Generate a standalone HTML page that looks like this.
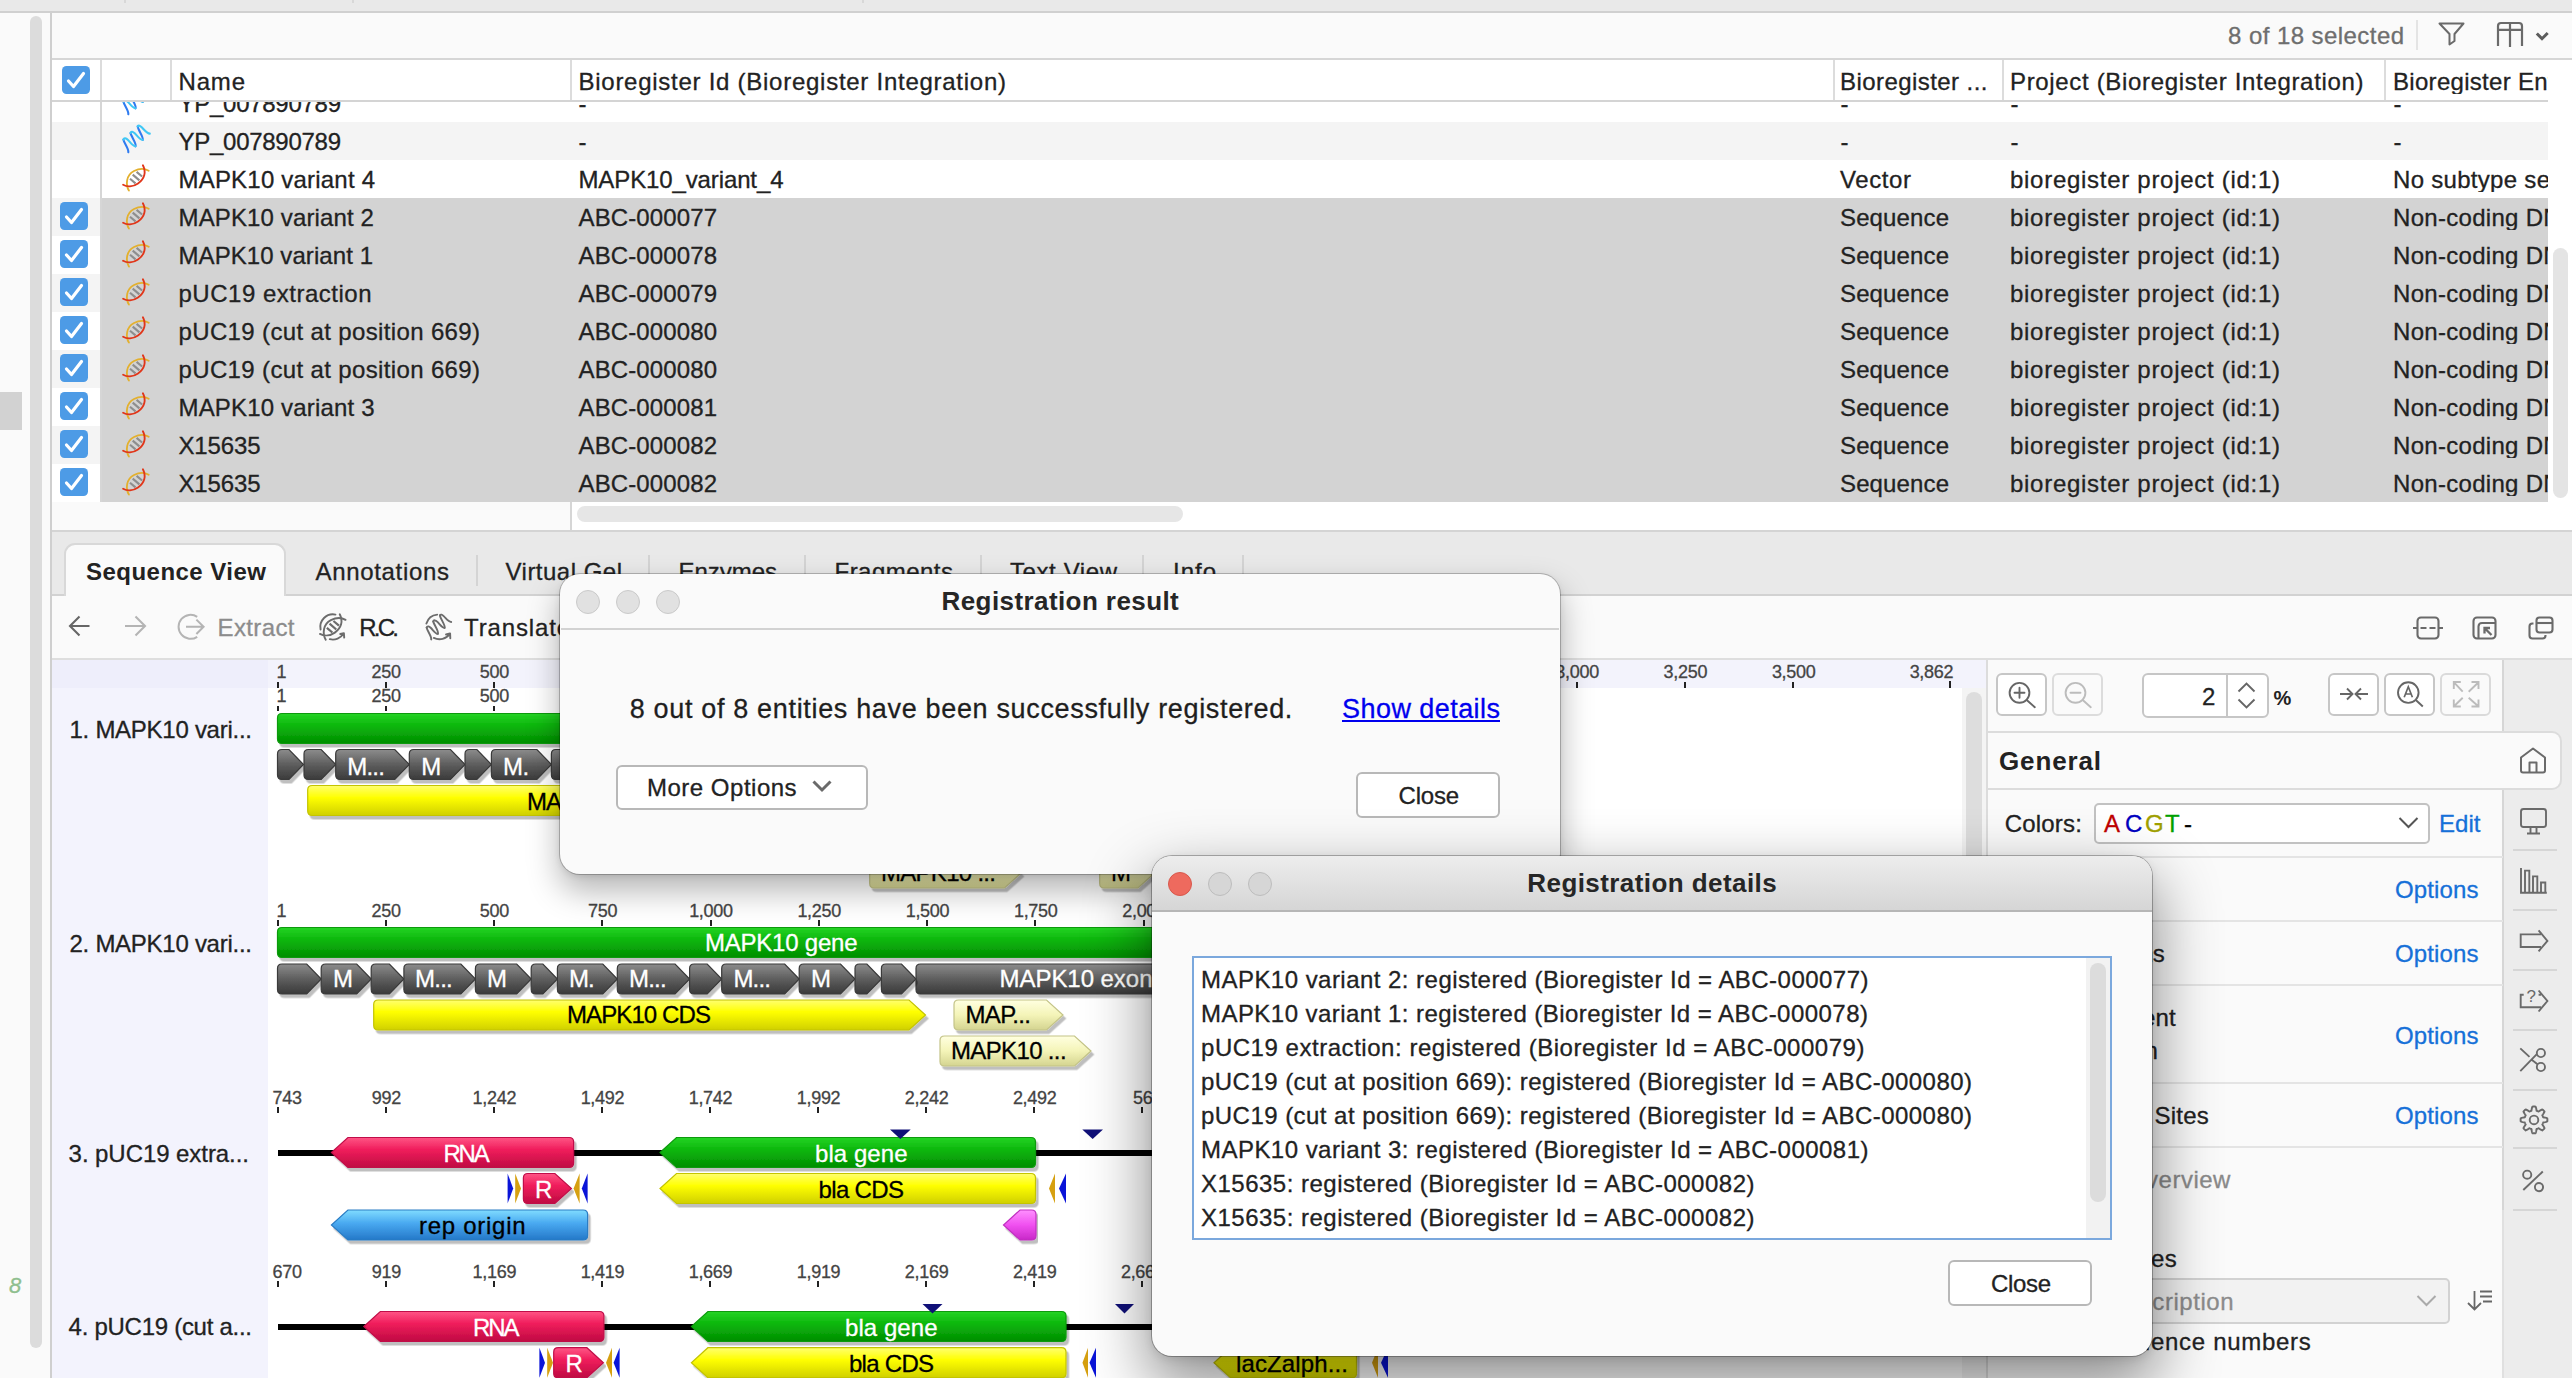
<!DOCTYPE html>
<html><head><meta charset="utf-8"><title>Registration result</title>
<style>
html,body{margin:0;padding:0;}
body{width:2572px;height:1378px;overflow:hidden;position:relative;background:#fafafa;font-family:"Liberation Sans",sans-serif;}
div{position:absolute;box-sizing:border-box;}
svg{position:absolute;overflow:visible;}
.t{white-space:nowrap;-webkit-text-stroke:0.3px;}
.b{-webkit-text-stroke:0;}
</style></head><body>
<div style="left:0px;top:0px;width:2572px;height:11px;background:#e9e9e9;"></div>
<div style="left:124px;top:0px;width:2px;height:3px;background:#d8d8d8;"></div>
<div style="left:352px;top:0px;width:2px;height:3px;background:#d8d8d8;"></div>
<div style="left:862px;top:0px;width:2px;height:3px;background:#d8d8d8;"></div>
<div style="left:0px;top:11px;width:2572px;height:2px;background:#d0d0d0;"></div>
<div style="left:0px;top:13px;width:50px;height:1365px;background:#fafafa;"></div>
<div style="left:30px;top:16px;width:12px;height:1332px;background:#dcdcdc;border-radius:6px;"></div>
<div style="left:0px;top:392px;width:22px;height:38px;background:#d2d2d2;"></div>
<div class="t" style="left:9.00px;top:1275.00px;font-size:22px;line-height:22px;color:#8fbf8f;letter-spacing:0.000px;font-style:italic;">8</div>
<div style="left:50px;top:13px;width:2px;height:1365px;background:#cfcfcf;"></div>
<div style="left:52px;top:13px;width:2520px;height:45px;background:#fafafa;"></div>
<div class="t" style="left:2228.00px;top:24.00px;font-size:24px;line-height:24px;color:#6e6e6e;letter-spacing:0.438px;">8 of 18 selected</div>
<div style="left:2416px;top:20px;width:2px;height:30px;background:#e4e4e4;"></div>
<svg style="left:2436px;top:20px" width="32" height="28" viewBox="0 0 32 28"><path d="M3.5 3.5 H27.5 L18.5 14 V21 L13.5 24.5 V14 Z" fill="none" stroke="#6a6a6a" stroke-width="2" stroke-linejoin="round"/></svg>
<svg style="left:2494px;top:20px" width="60" height="30" viewBox="0 0 60 30"><path d="M4 26 V6 Q4 3 7 3 H25 Q28 3 28 6 V26 M4 9.8 H28 M16 3 V27" fill="none" stroke="#6a6a6a" stroke-width="2.2"/><path d="M42.800 13.500 L48 18.700 L53.700 13" fill="none" stroke="#5c5c5c" stroke-width="3"/></svg>
<div style="left:52px;top:58px;width:2520px;height:2px;background:#d6d6d6;"></div>
<div style="left:52px;top:60px;width:2520px;height:470px;background:#ffffff;"></div>
<div style="left:52px;top:84px;width:48px;height:38px;background:#ffffff;"></div>
<div style="left:100px;top:84px;width:2448px;height:38px;background:#ffffff;"></div>
<svg style="left:114px;top:84px" width="44" height="38" viewBox="0 0 44 38"><g fill="none" stroke-linecap="round" stroke-width="2.1"><path d="M14.3 30.3 C15 27 10 21 9.4 17.6 M21.5 24.3 C23 22 17 14 16.5 11 M28.7 17.9 C30 15.5 24 8 23.7 4.4" stroke="#2f7bf0"/><path d="M9.4 17.6 C10 15.5 12 16 14 18 C16.5 20.5 19 24.5 21.5 24.3 M16.5 11 C17 9 19 9.5 21 11.5 C23.5 14 26 18 28.7 17.9 M23.7 4.4 C24.5 3 26 3.5 28 5.5 C30.5 8 33 11.5 35.8 11.6" stroke="#40c8f5"/></g></svg>
<div class="t" style="left:178.50px;top:92.00px;font-size:24px;line-height:24px;color:#222;letter-spacing:-0.270px;">YP_007890789</div>
<div class="t" style="left:578.50px;top:92.00px;font-size:24px;line-height:24px;color:#222;letter-spacing:0.000px;">-</div>
<div class="t" style="left:1840.50px;top:92.00px;font-size:24px;line-height:24px;color:#222;letter-spacing:0.000px;">-</div>
<div class="t" style="left:2010.50px;top:92.00px;font-size:24px;line-height:24px;color:#222;letter-spacing:0.000px;">-</div>
<div class="t" style="left:2393.50px;top:92.00px;font-size:24px;line-height:24px;color:#222;letter-spacing:0.000px;">-</div>
<div style="left:52px;top:122px;width:48px;height:38px;background:#f4f4f4;"></div>
<div style="left:100px;top:122px;width:2448px;height:38px;background:#f4f4f4;"></div>
<svg style="left:114px;top:122px" width="44" height="38" viewBox="0 0 44 38"><g fill="none" stroke-linecap="round" stroke-width="2.1"><path d="M14.3 30.3 C15 27 10 21 9.4 17.6 M21.5 24.3 C23 22 17 14 16.5 11 M28.7 17.9 C30 15.5 24 8 23.7 4.4" stroke="#2f7bf0"/><path d="M9.4 17.6 C10 15.5 12 16 14 18 C16.5 20.5 19 24.5 21.5 24.3 M16.5 11 C17 9 19 9.5 21 11.5 C23.5 14 26 18 28.7 17.9 M23.7 4.4 C24.5 3 26 3.5 28 5.5 C30.5 8 33 11.5 35.8 11.6" stroke="#40c8f5"/></g></svg>
<div class="t" style="left:178.50px;top:130.00px;font-size:24px;line-height:24px;color:#222;letter-spacing:-0.270px;">YP_007890789</div>
<div class="t" style="left:578.50px;top:130.00px;font-size:24px;line-height:24px;color:#222;letter-spacing:0.000px;">-</div>
<div class="t" style="left:1840.50px;top:130.00px;font-size:24px;line-height:24px;color:#222;letter-spacing:0.000px;">-</div>
<div class="t" style="left:2010.50px;top:130.00px;font-size:24px;line-height:24px;color:#222;letter-spacing:0.000px;">-</div>
<div class="t" style="left:2393.50px;top:130.00px;font-size:24px;line-height:24px;color:#222;letter-spacing:0.000px;">-</div>
<div style="left:52px;top:160px;width:48px;height:38px;background:#ffffff;"></div>
<div style="left:100px;top:160px;width:2448px;height:38px;background:#ffffff;"></div>
<svg style="left:114px;top:160px" width="44" height="38" viewBox="0 0 44 38"><g fill="none"><path d="M22.6 11.9 L28.1 16.5 M18.7 14.6 L25.4 20.4 M16 18.7 L21.5 23.4" stroke="#8e8e8e" stroke-width="2.1"/><path d="M14.9 30.6 C11.5 25 12 15 20 11 C25 8.5 31 8.5 34.7 10.75" stroke="#e3b02e" stroke-width="1.85" stroke-linecap="round"/><path d="M28.9 5.2 C32.5 12 30.5 19 24 23.5 C19 27 13 27 9.1 24.8" stroke="#e0361a" stroke-width="1.85" stroke-linecap="round"/></g></svg>
<div class="t" style="left:178.50px;top:168.00px;font-size:24px;line-height:24px;color:#222;letter-spacing:0.203px;">MAPK10 variant 4</div>
<div class="t" style="left:578.50px;top:168.00px;font-size:24px;line-height:24px;color:#222;letter-spacing:-0.120px;">MAPK10_variant_4</div>
<div class="t" style="left:1840.00px;top:168.00px;font-size:24px;line-height:24px;color:#222;letter-spacing:0.591px;">Vector</div>
<div class="t" style="left:2010.00px;top:168.00px;font-size:24px;line-height:24px;color:#222;letter-spacing:0.716px;">bioregister project (id:1)</div>
<div class="t" style="left:2393.00px;top:168.00px;font-size:24px;line-height:24px;color:#222;letter-spacing:0.300px;width:155px;overflow:hidden;">No subtype selected</div>
<div style="left:52px;top:198px;width:48px;height:38px;background:#f4f4f4;"></div>
<div style="left:100px;top:198px;width:2448px;height:38px;background:#d3d3d3;"></div>
<svg style="left:60px;top:202px" width="28" height="28" viewBox="0 0 28 28"><rect width="28" height="28" rx="4.5" fill="#4d9be6"/><path d="M6.5 15 L11.5 20.5 L21.5 7.5" fill="none" stroke="#fff" stroke-width="3.2" stroke-linecap="round" stroke-linejoin="round"/></svg>
<svg style="left:114px;top:198px" width="44" height="38" viewBox="0 0 44 38"><g fill="none"><path d="M22.6 11.9 L28.1 16.5 M18.7 14.6 L25.4 20.4 M16 18.7 L21.5 23.4" stroke="#8e8e8e" stroke-width="2.1"/><path d="M14.9 30.6 C11.5 25 12 15 20 11 C25 8.5 31 8.5 34.7 10.75" stroke="#e3b02e" stroke-width="1.85" stroke-linecap="round"/><path d="M28.9 5.2 C32.5 12 30.5 19 24 23.5 C19 27 13 27 9.1 24.8" stroke="#e0361a" stroke-width="1.85" stroke-linecap="round"/></g></svg>
<div class="t" style="left:178.50px;top:206.00px;font-size:24px;line-height:24px;color:#222;letter-spacing:0.136px;">MAPK10 variant 2</div>
<div class="t" style="left:578.50px;top:206.00px;font-size:24px;line-height:24px;color:#222;letter-spacing:0.120px;">ABC-000077</div>
<div class="t" style="left:1840.00px;top:206.00px;font-size:24px;line-height:24px;color:#222;letter-spacing:0.132px;">Sequence</div>
<div class="t" style="left:2010.00px;top:206.00px;font-size:24px;line-height:24px;color:#222;letter-spacing:0.716px;">bioregister project (id:1)</div>
<div class="t" style="left:2393.00px;top:206.00px;font-size:24px;line-height:24px;color:#222;letter-spacing:0.300px;width:155px;overflow:hidden;">Non-coding DNA</div>
<div style="left:52px;top:236px;width:48px;height:38px;background:#ffffff;"></div>
<div style="left:100px;top:236px;width:2448px;height:38px;background:#d3d3d3;"></div>
<svg style="left:60px;top:240px" width="28" height="28" viewBox="0 0 28 28"><rect width="28" height="28" rx="4.5" fill="#4d9be6"/><path d="M6.5 15 L11.5 20.5 L21.5 7.5" fill="none" stroke="#fff" stroke-width="3.2" stroke-linecap="round" stroke-linejoin="round"/></svg>
<svg style="left:114px;top:236px" width="44" height="38" viewBox="0 0 44 38"><g fill="none"><path d="M22.6 11.9 L28.1 16.5 M18.7 14.6 L25.4 20.4 M16 18.7 L21.5 23.4" stroke="#8e8e8e" stroke-width="2.1"/><path d="M14.9 30.6 C11.5 25 12 15 20 11 C25 8.5 31 8.5 34.7 10.75" stroke="#e3b02e" stroke-width="1.85" stroke-linecap="round"/><path d="M28.9 5.2 C32.5 12 30.5 19 24 23.5 C19 27 13 27 9.1 24.8" stroke="#e0361a" stroke-width="1.85" stroke-linecap="round"/></g></svg>
<div class="t" style="left:178.50px;top:244.00px;font-size:24px;line-height:24px;color:#222;letter-spacing:0.070px;">MAPK10 variant 1</div>
<div class="t" style="left:578.50px;top:244.00px;font-size:24px;line-height:24px;color:#222;letter-spacing:0.120px;">ABC-000078</div>
<div class="t" style="left:1840.00px;top:244.00px;font-size:24px;line-height:24px;color:#222;letter-spacing:0.132px;">Sequence</div>
<div class="t" style="left:2010.00px;top:244.00px;font-size:24px;line-height:24px;color:#222;letter-spacing:0.716px;">bioregister project (id:1)</div>
<div class="t" style="left:2393.00px;top:244.00px;font-size:24px;line-height:24px;color:#222;letter-spacing:0.300px;width:155px;overflow:hidden;">Non-coding DNA</div>
<div style="left:52px;top:274px;width:48px;height:38px;background:#f4f4f4;"></div>
<div style="left:100px;top:274px;width:2448px;height:38px;background:#d3d3d3;"></div>
<svg style="left:60px;top:278px" width="28" height="28" viewBox="0 0 28 28"><rect width="28" height="28" rx="4.5" fill="#4d9be6"/><path d="M6.5 15 L11.5 20.5 L21.5 7.5" fill="none" stroke="#fff" stroke-width="3.2" stroke-linecap="round" stroke-linejoin="round"/></svg>
<svg style="left:114px;top:274px" width="44" height="38" viewBox="0 0 44 38"><g fill="none"><path d="M22.6 11.9 L28.1 16.5 M18.7 14.6 L25.4 20.4 M16 18.7 L21.5 23.4" stroke="#8e8e8e" stroke-width="2.1"/><path d="M14.9 30.6 C11.5 25 12 15 20 11 C25 8.5 31 8.5 34.7 10.75" stroke="#e3b02e" stroke-width="1.85" stroke-linecap="round"/><path d="M28.9 5.2 C32.5 12 30.5 19 24 23.5 C19 27 13 27 9.1 24.8" stroke="#e0361a" stroke-width="1.85" stroke-linecap="round"/></g></svg>
<div class="t" style="left:178.50px;top:282.00px;font-size:24px;line-height:24px;color:#222;letter-spacing:0.506px;">pUC19 extraction</div>
<div class="t" style="left:578.50px;top:282.00px;font-size:24px;line-height:24px;color:#222;letter-spacing:0.120px;">ABC-000079</div>
<div class="t" style="left:1840.00px;top:282.00px;font-size:24px;line-height:24px;color:#222;letter-spacing:0.132px;">Sequence</div>
<div class="t" style="left:2010.00px;top:282.00px;font-size:24px;line-height:24px;color:#222;letter-spacing:0.716px;">bioregister project (id:1)</div>
<div class="t" style="left:2393.00px;top:282.00px;font-size:24px;line-height:24px;color:#222;letter-spacing:0.300px;width:155px;overflow:hidden;">Non-coding DNA</div>
<div style="left:52px;top:312px;width:48px;height:38px;background:#ffffff;"></div>
<div style="left:100px;top:312px;width:2448px;height:38px;background:#d3d3d3;"></div>
<svg style="left:60px;top:316px" width="28" height="28" viewBox="0 0 28 28"><rect width="28" height="28" rx="4.5" fill="#4d9be6"/><path d="M6.5 15 L11.5 20.5 L21.5 7.5" fill="none" stroke="#fff" stroke-width="3.2" stroke-linecap="round" stroke-linejoin="round"/></svg>
<svg style="left:114px;top:312px" width="44" height="38" viewBox="0 0 44 38"><g fill="none"><path d="M22.6 11.9 L28.1 16.5 M18.7 14.6 L25.4 20.4 M16 18.7 L21.5 23.4" stroke="#8e8e8e" stroke-width="2.1"/><path d="M14.9 30.6 C11.5 25 12 15 20 11 C25 8.5 31 8.5 34.7 10.75" stroke="#e3b02e" stroke-width="1.85" stroke-linecap="round"/><path d="M28.9 5.2 C32.5 12 30.5 19 24 23.5 C19 27 13 27 9.1 24.8" stroke="#e0361a" stroke-width="1.85" stroke-linecap="round"/></g></svg>
<div class="t" style="left:178.50px;top:320.00px;font-size:24px;line-height:24px;color:#222;letter-spacing:0.360px;">pUC19 (cut at position 669)</div>
<div class="t" style="left:578.50px;top:320.00px;font-size:24px;line-height:24px;color:#222;letter-spacing:0.120px;">ABC-000080</div>
<div class="t" style="left:1840.00px;top:320.00px;font-size:24px;line-height:24px;color:#222;letter-spacing:0.132px;">Sequence</div>
<div class="t" style="left:2010.00px;top:320.00px;font-size:24px;line-height:24px;color:#222;letter-spacing:0.716px;">bioregister project (id:1)</div>
<div class="t" style="left:2393.00px;top:320.00px;font-size:24px;line-height:24px;color:#222;letter-spacing:0.300px;width:155px;overflow:hidden;">Non-coding DNA</div>
<div style="left:52px;top:350px;width:48px;height:38px;background:#f4f4f4;"></div>
<div style="left:100px;top:350px;width:2448px;height:38px;background:#d3d3d3;"></div>
<svg style="left:60px;top:354px" width="28" height="28" viewBox="0 0 28 28"><rect width="28" height="28" rx="4.5" fill="#4d9be6"/><path d="M6.5 15 L11.5 20.5 L21.5 7.5" fill="none" stroke="#fff" stroke-width="3.2" stroke-linecap="round" stroke-linejoin="round"/></svg>
<svg style="left:114px;top:350px" width="44" height="38" viewBox="0 0 44 38"><g fill="none"><path d="M22.6 11.9 L28.1 16.5 M18.7 14.6 L25.4 20.4 M16 18.7 L21.5 23.4" stroke="#8e8e8e" stroke-width="2.1"/><path d="M14.9 30.6 C11.5 25 12 15 20 11 C25 8.5 31 8.5 34.7 10.75" stroke="#e3b02e" stroke-width="1.85" stroke-linecap="round"/><path d="M28.9 5.2 C32.5 12 30.5 19 24 23.5 C19 27 13 27 9.1 24.8" stroke="#e0361a" stroke-width="1.85" stroke-linecap="round"/></g></svg>
<div class="t" style="left:178.50px;top:358.00px;font-size:24px;line-height:24px;color:#222;letter-spacing:0.360px;">pUC19 (cut at position 669)</div>
<div class="t" style="left:578.50px;top:358.00px;font-size:24px;line-height:24px;color:#222;letter-spacing:0.120px;">ABC-000080</div>
<div class="t" style="left:1840.00px;top:358.00px;font-size:24px;line-height:24px;color:#222;letter-spacing:0.132px;">Sequence</div>
<div class="t" style="left:2010.00px;top:358.00px;font-size:24px;line-height:24px;color:#222;letter-spacing:0.716px;">bioregister project (id:1)</div>
<div class="t" style="left:2393.00px;top:358.00px;font-size:24px;line-height:24px;color:#222;letter-spacing:0.300px;width:155px;overflow:hidden;">Non-coding DNA</div>
<div style="left:52px;top:388px;width:48px;height:38px;background:#ffffff;"></div>
<div style="left:100px;top:388px;width:2448px;height:38px;background:#d3d3d3;"></div>
<svg style="left:60px;top:392px" width="28" height="28" viewBox="0 0 28 28"><rect width="28" height="28" rx="4.5" fill="#4d9be6"/><path d="M6.5 15 L11.5 20.5 L21.5 7.5" fill="none" stroke="#fff" stroke-width="3.2" stroke-linecap="round" stroke-linejoin="round"/></svg>
<svg style="left:114px;top:388px" width="44" height="38" viewBox="0 0 44 38"><g fill="none"><path d="M22.6 11.9 L28.1 16.5 M18.7 14.6 L25.4 20.4 M16 18.7 L21.5 23.4" stroke="#8e8e8e" stroke-width="2.1"/><path d="M14.9 30.6 C11.5 25 12 15 20 11 C25 8.5 31 8.5 34.7 10.75" stroke="#e3b02e" stroke-width="1.85" stroke-linecap="round"/><path d="M28.9 5.2 C32.5 12 30.5 19 24 23.5 C19 27 13 27 9.1 24.8" stroke="#e0361a" stroke-width="1.85" stroke-linecap="round"/></g></svg>
<div class="t" style="left:178.50px;top:396.00px;font-size:24px;line-height:24px;color:#222;letter-spacing:0.170px;">MAPK10 variant 3</div>
<div class="t" style="left:578.50px;top:396.00px;font-size:24px;line-height:24px;color:#222;letter-spacing:0.120px;">ABC-000081</div>
<div class="t" style="left:1840.00px;top:396.00px;font-size:24px;line-height:24px;color:#222;letter-spacing:0.132px;">Sequence</div>
<div class="t" style="left:2010.00px;top:396.00px;font-size:24px;line-height:24px;color:#222;letter-spacing:0.716px;">bioregister project (id:1)</div>
<div class="t" style="left:2393.00px;top:396.00px;font-size:24px;line-height:24px;color:#222;letter-spacing:0.300px;width:155px;overflow:hidden;">Non-coding DNA</div>
<div style="left:52px;top:426px;width:48px;height:38px;background:#f4f4f4;"></div>
<div style="left:100px;top:426px;width:2448px;height:38px;background:#d3d3d3;"></div>
<svg style="left:60px;top:430px" width="28" height="28" viewBox="0 0 28 28"><rect width="28" height="28" rx="4.5" fill="#4d9be6"/><path d="M6.5 15 L11.5 20.5 L21.5 7.5" fill="none" stroke="#fff" stroke-width="3.2" stroke-linecap="round" stroke-linejoin="round"/></svg>
<svg style="left:114px;top:426px" width="44" height="38" viewBox="0 0 44 38"><g fill="none"><path d="M22.6 11.9 L28.1 16.5 M18.7 14.6 L25.4 20.4 M16 18.7 L21.5 23.4" stroke="#8e8e8e" stroke-width="2.1"/><path d="M14.9 30.6 C11.5 25 12 15 20 11 C25 8.5 31 8.5 34.7 10.75" stroke="#e3b02e" stroke-width="1.85" stroke-linecap="round"/><path d="M28.9 5.2 C32.5 12 30.5 19 24 23.5 C19 27 13 27 9.1 24.8" stroke="#e0361a" stroke-width="1.85" stroke-linecap="round"/></g></svg>
<div class="t" style="left:178.50px;top:434.00px;font-size:24px;line-height:24px;color:#222;letter-spacing:-0.147px;">X15635</div>
<div class="t" style="left:578.50px;top:434.00px;font-size:24px;line-height:24px;color:#222;letter-spacing:0.120px;">ABC-000082</div>
<div class="t" style="left:1840.00px;top:434.00px;font-size:24px;line-height:24px;color:#222;letter-spacing:0.132px;">Sequence</div>
<div class="t" style="left:2010.00px;top:434.00px;font-size:24px;line-height:24px;color:#222;letter-spacing:0.716px;">bioregister project (id:1)</div>
<div class="t" style="left:2393.00px;top:434.00px;font-size:24px;line-height:24px;color:#222;letter-spacing:0.300px;width:155px;overflow:hidden;">Non-coding DNA</div>
<div style="left:52px;top:464px;width:48px;height:38px;background:#ffffff;"></div>
<div style="left:100px;top:464px;width:2448px;height:38px;background:#d3d3d3;"></div>
<svg style="left:60px;top:468px" width="28" height="28" viewBox="0 0 28 28"><rect width="28" height="28" rx="4.5" fill="#4d9be6"/><path d="M6.5 15 L11.5 20.5 L21.5 7.5" fill="none" stroke="#fff" stroke-width="3.2" stroke-linecap="round" stroke-linejoin="round"/></svg>
<svg style="left:114px;top:464px" width="44" height="38" viewBox="0 0 44 38"><g fill="none"><path d="M22.6 11.9 L28.1 16.5 M18.7 14.6 L25.4 20.4 M16 18.7 L21.5 23.4" stroke="#8e8e8e" stroke-width="2.1"/><path d="M14.9 30.6 C11.5 25 12 15 20 11 C25 8.5 31 8.5 34.7 10.75" stroke="#e3b02e" stroke-width="1.85" stroke-linecap="round"/><path d="M28.9 5.2 C32.5 12 30.5 19 24 23.5 C19 27 13 27 9.1 24.8" stroke="#e0361a" stroke-width="1.85" stroke-linecap="round"/></g></svg>
<div class="t" style="left:178.50px;top:472.00px;font-size:24px;line-height:24px;color:#222;letter-spacing:-0.147px;">X15635</div>
<div class="t" style="left:578.50px;top:472.00px;font-size:24px;line-height:24px;color:#222;letter-spacing:0.120px;">ABC-000082</div>
<div class="t" style="left:1840.00px;top:472.00px;font-size:24px;line-height:24px;color:#222;letter-spacing:0.132px;">Sequence</div>
<div class="t" style="left:2010.00px;top:472.00px;font-size:24px;line-height:24px;color:#222;letter-spacing:0.716px;">bioregister project (id:1)</div>
<div class="t" style="left:2393.00px;top:472.00px;font-size:24px;line-height:24px;color:#222;letter-spacing:0.300px;width:155px;overflow:hidden;">Non-coding DNA</div>
<div style="left:100px;top:60px;width:2px;height:442px;background:#d6d6d6;"></div>
<div style="left:52px;top:60px;width:2496px;height:40px;background:#ffffff;"></div>
<div style="left:52px;top:100px;width:2496px;height:2px;background:#d4d4d4;"></div>
<div style="left:100px;top:60px;width:2px;height:40px;background:#dcdcdc;"></div>
<div style="left:170px;top:60px;width:2px;height:40px;background:#dcdcdc;"></div>
<div style="left:570px;top:60px;width:2px;height:40px;background:#dcdcdc;"></div>
<div style="left:1833px;top:60px;width:2px;height:40px;background:#dcdcdc;"></div>
<div style="left:2002px;top:60px;width:2px;height:40px;background:#dcdcdc;"></div>
<div style="left:2384px;top:60px;width:2px;height:40px;background:#dcdcdc;"></div>
<svg style="left:62px;top:66px" width="28" height="28" viewBox="0 0 28 28"><rect width="28" height="28" rx="4.5" fill="#4d9be6"/><path d="M6.5 15 L11.5 20.5 L21.5 7.5" fill="none" stroke="#fff" stroke-width="3.2" stroke-linecap="round" stroke-linejoin="round"/></svg>
<div class="t" style="left:178.50px;top:70.00px;font-size:24px;line-height:24px;color:#222;letter-spacing:0.828px;">Name</div>
<div class="t" style="left:578.50px;top:70.00px;font-size:24px;line-height:24px;color:#222;letter-spacing:0.734px;">Bioregister Id (Bioregister Integration)</div>
<div class="t" style="left:1840.00px;top:70.00px;font-size:24px;line-height:24px;color:#222;letter-spacing:0.435px;">Bioregister ...</div>
<div class="t" style="left:2010.00px;top:70.00px;font-size:24px;line-height:24px;color:#222;letter-spacing:0.667px;">Project (Bioregister Integration)</div>
<div class="t" style="left:2393.00px;top:70.00px;font-size:24px;line-height:24px;color:#222;letter-spacing:0.300px;width:155px;overflow:hidden;">Bioregister Entity</div>
<div style="left:2548px;top:60px;width:24px;height:470px;background:#ffffff;"></div>
<div style="left:2553px;top:248px;width:15px;height:250px;background:#e4e4e4;border-radius:7.5px;"></div>
<div style="left:52px;top:502px;width:518px;height:28px;background:#fafafa;"></div>
<div style="left:570px;top:502px;width:2px;height:28px;background:#d6d6d6;"></div>
<div style="left:572px;top:502px;width:2000px;height:28px;background:#ffffff;"></div>
<div style="left:577px;top:506px;width:606px;height:16px;background:#e6e6e6;border-radius:8px;"></div>
<div style="left:52px;top:530px;width:2520px;height:2px;background:#d4d4d4;"></div>
<div style="left:52px;top:532px;width:2520px;height:62px;background:#e9e9e9;"></div>
<div style="left:52px;top:594px;width:2520px;height:2px;background:#d2d2d2;"></div>
<div style="left:64px;top:543px;width:222px;height:53px;background:#fafafa;border:2px solid #d8d8d8;border-bottom:none;border-radius:11px 11px 0 0;"></div>
<div class="t b" style="left:86.00px;top:560.00px;font-size:24px;line-height:24px;color:#222;letter-spacing:0.475px;font-weight:bold;">Sequence View</div>
<div class="t" style="left:315.50px;top:560.00px;font-size:24px;line-height:24px;color:#222;letter-spacing:0.675px;">Annotations</div>
<div class="t" style="left:505.50px;top:560.00px;font-size:24px;line-height:24px;color:#222;letter-spacing:0.489px;">Virtual Gel</div>
<div class="t" style="left:678.50px;top:560.00px;font-size:24px;line-height:24px;color:#222;letter-spacing:-0.034px;">Enzymes</div>
<div class="t" style="left:834.50px;top:560.00px;font-size:24px;line-height:24px;color:#222;letter-spacing:0.475px;">Fragments</div>
<div class="t" style="left:1010.00px;top:560.00px;font-size:24px;line-height:24px;color:#222;letter-spacing:0.592px;">Text View</div>
<div class="t" style="left:1173.00px;top:560.00px;font-size:24px;line-height:24px;color:#222;letter-spacing:0.990px;">Info</div>
<div style="left:476px;top:555px;width:2px;height:31px;background:#d4d4d4;"></div>
<div style="left:648px;top:555px;width:2px;height:31px;background:#d4d4d4;"></div>
<div style="left:804px;top:555px;width:2px;height:31px;background:#d4d4d4;"></div>
<div style="left:980px;top:555px;width:2px;height:31px;background:#d4d4d4;"></div>
<div style="left:1142px;top:555px;width:2px;height:31px;background:#d4d4d4;"></div>
<div style="left:1242px;top:555px;width:2px;height:31px;background:#d4d4d4;"></div>
<div style="left:52px;top:596px;width:2520px;height:62px;background:#fafafa;"></div>
<div style="left:52px;top:658px;width:2520px;height:2px;background:#dedede;"></div>
<svg style="left:64px;top:610px" width="90" height="32" viewBox="0 0 90 32"><g fill="none" stroke-width="2.1" stroke-linecap="butt"><path d="M25.5 16 H6.5 M15.5 6.5 L6 16 L15.5 25.5" stroke="#666"/><path d="M61 16 H80.5 M71.5 6.5 L81 16 L71.5 25.5" stroke="#b4b4b4"/></g></svg>
<svg style="left:174px;top:610px" width="36" height="32" viewBox="0 0 36 32"><g fill="none" stroke="#b4b4b4" stroke-width="2"><path d="M23.200 6.800 A12 12 0 1 0 23.200 26.800"/><path d="M12 16.800 H29 M22.400 9.600 L29.600 16.800 L22.400 24"/></g></svg>
<div class="t" style="left:217.50px;top:616.00px;font-size:24px;line-height:24px;color:#8c8c8c;letter-spacing:0.383px;">Extract</div>
<svg style="left:310px;top:606px" width="150" height="40" viewBox="0 0 150 40"><g fill="none" stroke="#6c6c6c" stroke-width="1.9" stroke-linecap="round" stroke-linejoin="round"><g transform="translate(0.85,3.1)"><path d="M22.6 11.9 L28.1 16.5 M18.7 14.6 L25.4 20.4 M16 18.7 L21.5 23.4" stroke-width="2.2" stroke-linecap="butt"/><path d="M14.9 30.6 C11.5 25 12 15 20 11 C25 8.5 31 8.5 34.7 10.75"/><path d="M28.9 5.2 C32.5 12 30.5 19 24 23.5 C19 27 13 27 9.1 24.8"/></g><path d="M10.6 23.5 A12.6 12.6 0 0 1 25.5 8.6"/><path d="M19.8 33.2 A12.6 12.6 0 0 0 33.6 27.6 M30.2 28 L33.9 27.2 L34.2 31.6"/><g transform="translate(107.9,5.25) scale(0.93)" stroke-width="2.05"><path d="M14.3 30.3 C15 27 10 21 9.4 17.6 M21.5 24.3 C23 22 17 14 16.5 11 M28.7 17.9 C30 15.5 24 8 23.7 4.4"/><path d="M9.4 17.6 C10 15.5 12 16 14 18 C16.5 20.5 19 24.5 21.5 24.3 M16.5 11 C17 9 19 9.5 21 11.5 C23.5 14 26 18 28.7 17.9 M23.7 4.4 C24.5 3 26 3.5 28 5.5 C30.5 8 33 11.5 35.8 11.6"/></g><path d="M116.4 17.5 A12.6 12.6 0 0 1 127.2 8.6"/><path d="M123.8 31.9 A12.6 12.6 0 0 0 139.9 27.8 M136 28.5 L140.1 27.4 L140.3 32.2"/></g></svg>
<div class="t" style="left:359.30px;top:616.00px;font-size:24px;line-height:24px;color:#222;letter-spacing:-2.767px;">R.C.</div>
<div class="t" style="left:464.00px;top:616.00px;font-size:24px;line-height:24px;color:#222;letter-spacing:0.857px;">Translate</div>
<svg style="left:2410px;top:612px" width="150" height="32" viewBox="0 0 150 32"><g fill="none" stroke="#6a6a6a" stroke-width="2.1"><rect x="7.5" y="5.5" width="21" height="21" rx="3.5"/><path d="M3 16 H7.5 M28.5 16 H33 M10.5 16 H16.5 M19.5 16 H25.5"/><rect x="63.5" y="5.5" width="22" height="21" rx="3.5"/><path d="M68.5 26.500 V14.500 Q68.5 11 72 11 H85.5"/><path d="M74.5 16 L81.5 23 M74.5 21.500 V16 H80" stroke-width="2.3"/><rect x="126.500" y="5.500" width="16" height="15" rx="3"/><path d="M126.500 11 H142.500"/><path d="M123.500 11.500 H122.500 Q119.500 11.500 119.500 14.500 V23.500 Q119.500 26.500 122.500 26.500 H132.500 Q135.500 26.500 135.500 23.500 V23"/></g></svg>
<div style="left:52px;top:660px;width:216px;height:718px;background:#f3f3fd;"></div>
<div style="left:268px;top:660px;width:1694px;height:718px;background:#ffffff;"></div>
<div style="left:52px;top:660px;width:216px;height:28px;background:#eeeefb;"></div>
<div style="left:268px;top:660px;width:1719px;height:28px;background:#f3f3fc;"></div>
<div style="left:1962px;top:688px;width:25px;height:690px;background:#f4f4f4;"></div>
<div style="left:1966px;top:692px;width:16px;height:420px;background:#dddddd;border-radius:8px;"></div>
<div style="left:277px;top:682px;width:2px;height:6px;background:#222;"></div>
<div class="t" style="left:276.40px;top:663.20px;font-size:18px;line-height:18px;color:#444;letter-spacing:-0.200px;">1</div>
<div style="left:385px;top:682px;width:2px;height:6px;background:#222;"></div>
<div class="t" style="left:371.52px;top:663.20px;font-size:18px;line-height:18px;color:#444;letter-spacing:-0.300px;">250</div>
<div style="left:493px;top:682px;width:2px;height:6px;background:#222;"></div>
<div class="t" style="left:479.79px;top:663.20px;font-size:18px;line-height:18px;color:#444;letter-spacing:-0.300px;">500</div>
<div style="left:601px;top:682px;width:2px;height:6px;background:#222;"></div>
<div class="t" style="left:588.07px;top:663.20px;font-size:18px;line-height:18px;color:#444;letter-spacing:-0.300px;">750</div>
<div style="left:710px;top:682px;width:2px;height:6px;background:#222;"></div>
<div class="t" style="left:689.14px;top:663.20px;font-size:18px;line-height:18px;color:#444;letter-spacing:-0.300px;">1,000</div>
<div style="left:818px;top:682px;width:2px;height:6px;background:#222;"></div>
<div class="t" style="left:797.41px;top:663.20px;font-size:18px;line-height:18px;color:#444;letter-spacing:-0.300px;">1,250</div>
<div style="left:926px;top:682px;width:2px;height:6px;background:#222;"></div>
<div class="t" style="left:905.69px;top:663.20px;font-size:18px;line-height:18px;color:#444;letter-spacing:-0.300px;">1,500</div>
<div style="left:1034px;top:682px;width:2px;height:6px;background:#222;"></div>
<div class="t" style="left:1013.96px;top:663.20px;font-size:18px;line-height:18px;color:#444;letter-spacing:-0.300px;">1,750</div>
<div style="left:1143px;top:682px;width:2px;height:6px;background:#222;"></div>
<div class="t" style="left:1122.24px;top:663.20px;font-size:18px;line-height:18px;color:#444;letter-spacing:-0.300px;">2,000</div>
<div style="left:1251px;top:682px;width:2px;height:6px;background:#222;"></div>
<div class="t" style="left:1230.51px;top:663.20px;font-size:18px;line-height:18px;color:#444;letter-spacing:-0.300px;">2,250</div>
<div style="left:1359px;top:682px;width:2px;height:6px;background:#222;"></div>
<div class="t" style="left:1338.79px;top:663.20px;font-size:18px;line-height:18px;color:#444;letter-spacing:-0.300px;">2,500</div>
<div style="left:1467px;top:682px;width:2px;height:6px;background:#222;"></div>
<div class="t" style="left:1447.06px;top:663.20px;font-size:18px;line-height:18px;color:#444;letter-spacing:-0.300px;">2,750</div>
<div style="left:1576px;top:682px;width:2px;height:6px;background:#222;"></div>
<div class="t" style="left:1555.34px;top:663.20px;font-size:18px;line-height:18px;color:#444;letter-spacing:-0.300px;">3,000</div>
<div style="left:1684px;top:682px;width:2px;height:6px;background:#222;"></div>
<div class="t" style="left:1663.61px;top:663.20px;font-size:18px;line-height:18px;color:#444;letter-spacing:-0.300px;">3,250</div>
<div style="left:1792px;top:682px;width:2px;height:6px;background:#222;"></div>
<div class="t" style="left:1771.89px;top:663.20px;font-size:18px;line-height:18px;color:#444;letter-spacing:-0.300px;">3,500</div>
<div style="left:1949px;top:681px;width:2px;height:7px;background:#222;"></div>
<div class="t" style="left:1909.64px;top:663.20px;font-size:18px;line-height:18px;color:#444;letter-spacing:-0.300px;">3,862</div>
<div style="left:277px;top:706px;width:2px;height:5px;background:#222;"></div>
<div class="t" style="left:276.40px;top:687.40px;font-size:18px;line-height:18px;color:#444;letter-spacing:-0.200px;">1</div>
<div style="left:385px;top:706px;width:2px;height:5px;background:#222;"></div>
<div class="t" style="left:371.52px;top:687.40px;font-size:18px;line-height:18px;color:#444;letter-spacing:-0.300px;">250</div>
<div style="left:493px;top:706px;width:2px;height:5px;background:#222;"></div>
<div class="t" style="left:479.79px;top:687.40px;font-size:18px;line-height:18px;color:#444;letter-spacing:-0.300px;">500</div>
<div style="left:601px;top:706px;width:2px;height:5px;background:#222;"></div>
<div class="t" style="left:588.07px;top:687.40px;font-size:18px;line-height:18px;color:#444;letter-spacing:-0.300px;">750</div>
<div style="left:710px;top:706px;width:2px;height:5px;background:#222;"></div>
<div class="t" style="left:689.14px;top:687.40px;font-size:18px;line-height:18px;color:#444;letter-spacing:-0.300px;">1,000</div>
<div style="left:818px;top:706px;width:2px;height:5px;background:#222;"></div>
<div class="t" style="left:797.41px;top:687.40px;font-size:18px;line-height:18px;color:#444;letter-spacing:-0.300px;">1,250</div>
<div style="left:926px;top:706px;width:2px;height:5px;background:#222;"></div>
<div class="t" style="left:905.69px;top:687.40px;font-size:18px;line-height:18px;color:#444;letter-spacing:-0.300px;">1,500</div>
<div style="left:1034px;top:706px;width:2px;height:5px;background:#222;"></div>
<div class="t" style="left:1013.96px;top:687.40px;font-size:18px;line-height:18px;color:#444;letter-spacing:-0.300px;">1,750</div>
<div style="left:1143px;top:706px;width:2px;height:5px;background:#222;"></div>
<div class="t" style="left:1122.24px;top:687.40px;font-size:18px;line-height:18px;color:#444;letter-spacing:-0.300px;">2,000</div>
<div style="left:1251px;top:706px;width:2px;height:5px;background:#222;"></div>
<div class="t" style="left:1230.51px;top:687.40px;font-size:18px;line-height:18px;color:#444;letter-spacing:-0.300px;">2,250</div>
<div style="left:1359px;top:706px;width:2px;height:5px;background:#222;"></div>
<div class="t" style="left:1338.79px;top:687.40px;font-size:18px;line-height:18px;color:#444;letter-spacing:-0.300px;">2,500</div>
<div style="left:1467px;top:706px;width:2px;height:5px;background:#222;"></div>
<div class="t" style="left:1447.06px;top:687.40px;font-size:18px;line-height:18px;color:#444;letter-spacing:-0.300px;">2,750</div>
<div style="left:277px;top:920px;width:2px;height:6px;background:#222;"></div>
<div class="t" style="left:276.40px;top:901.80px;font-size:18px;line-height:18px;color:#444;letter-spacing:-0.200px;">1</div>
<div style="left:385px;top:920px;width:2px;height:6px;background:#222;"></div>
<div class="t" style="left:371.52px;top:901.80px;font-size:18px;line-height:18px;color:#444;letter-spacing:-0.300px;">250</div>
<div style="left:493px;top:920px;width:2px;height:6px;background:#222;"></div>
<div class="t" style="left:479.79px;top:901.80px;font-size:18px;line-height:18px;color:#444;letter-spacing:-0.300px;">500</div>
<div style="left:601px;top:920px;width:2px;height:6px;background:#222;"></div>
<div class="t" style="left:588.07px;top:901.80px;font-size:18px;line-height:18px;color:#444;letter-spacing:-0.300px;">750</div>
<div style="left:710px;top:920px;width:2px;height:6px;background:#222;"></div>
<div class="t" style="left:689.14px;top:901.80px;font-size:18px;line-height:18px;color:#444;letter-spacing:-0.300px;">1,000</div>
<div style="left:818px;top:920px;width:2px;height:6px;background:#222;"></div>
<div class="t" style="left:797.41px;top:901.80px;font-size:18px;line-height:18px;color:#444;letter-spacing:-0.300px;">1,250</div>
<div style="left:926px;top:920px;width:2px;height:6px;background:#222;"></div>
<div class="t" style="left:905.69px;top:901.80px;font-size:18px;line-height:18px;color:#444;letter-spacing:-0.300px;">1,500</div>
<div style="left:1034px;top:920px;width:2px;height:6px;background:#222;"></div>
<div class="t" style="left:1013.96px;top:901.80px;font-size:18px;line-height:18px;color:#444;letter-spacing:-0.300px;">1,750</div>
<div style="left:1143px;top:920px;width:2px;height:6px;background:#222;"></div>
<div class="t" style="left:1122.24px;top:901.80px;font-size:18px;line-height:18px;color:#444;letter-spacing:-0.300px;">2,000</div>
<div style="left:1251px;top:920px;width:2px;height:6px;background:#222;"></div>
<div class="t" style="left:1230.51px;top:901.80px;font-size:18px;line-height:18px;color:#444;letter-spacing:-0.300px;">2,250</div>
<div style="left:1359px;top:920px;width:2px;height:6px;background:#222;"></div>
<div class="t" style="left:1338.79px;top:901.80px;font-size:18px;line-height:18px;color:#444;letter-spacing:-0.300px;">2,500</div>
<div style="left:1467px;top:920px;width:2px;height:6px;background:#222;"></div>
<div class="t" style="left:1447.06px;top:901.80px;font-size:18px;line-height:18px;color:#444;letter-spacing:-0.300px;">2,750</div>
<div style="left:1576px;top:920px;width:2px;height:6px;background:#222;"></div>
<div class="t" style="left:1555.34px;top:901.80px;font-size:18px;line-height:18px;color:#444;letter-spacing:-0.300px;">3,000</div>
<div style="left:277px;top:1107px;width:2px;height:6px;background:#222;"></div>
<div class="t" style="left:272.40px;top:1089.30px;font-size:18px;line-height:18px;color:#444;letter-spacing:-0.200px;">743</div>
<div style="left:385px;top:1107px;width:2px;height:6px;background:#222;"></div>
<div class="t" style="left:371.74px;top:1089.30px;font-size:18px;line-height:18px;color:#444;letter-spacing:-0.300px;">992</div>
<div style="left:493px;top:1107px;width:2px;height:6px;background:#222;"></div>
<div class="t" style="left:472.59px;top:1089.30px;font-size:18px;line-height:18px;color:#444;letter-spacing:-0.300px;">1,242</div>
<div style="left:601px;top:1107px;width:2px;height:6px;background:#222;"></div>
<div class="t" style="left:580.65px;top:1089.30px;font-size:18px;line-height:18px;color:#444;letter-spacing:-0.300px;">1,492</div>
<div style="left:709px;top:1107px;width:2px;height:6px;background:#222;"></div>
<div class="t" style="left:688.71px;top:1089.30px;font-size:18px;line-height:18px;color:#444;letter-spacing:-0.300px;">1,742</div>
<div style="left:817px;top:1107px;width:2px;height:6px;background:#222;"></div>
<div class="t" style="left:796.77px;top:1089.30px;font-size:18px;line-height:18px;color:#444;letter-spacing:-0.300px;">1,992</div>
<div style="left:925px;top:1107px;width:2px;height:6px;background:#222;"></div>
<div class="t" style="left:904.83px;top:1089.30px;font-size:18px;line-height:18px;color:#444;letter-spacing:-0.300px;">2,242</div>
<div style="left:1033px;top:1107px;width:2px;height:6px;background:#222;"></div>
<div class="t" style="left:1012.89px;top:1089.30px;font-size:18px;line-height:18px;color:#444;letter-spacing:-0.300px;">2,492</div>
<div style="left:1141px;top:1107px;width:2px;height:6px;background:#222;"></div>
<div class="t" style="left:1133.01px;top:1089.30px;font-size:18px;line-height:18px;color:#444;letter-spacing:-0.300px;">56</div>
<div style="left:277px;top:1281px;width:2px;height:6px;background:#222;"></div>
<div class="t" style="left:272.40px;top:1263.00px;font-size:18px;line-height:18px;color:#444;letter-spacing:-0.200px;">670</div>
<div style="left:385px;top:1281px;width:2px;height:6px;background:#222;"></div>
<div class="t" style="left:371.74px;top:1263.00px;font-size:18px;line-height:18px;color:#444;letter-spacing:-0.300px;">919</div>
<div style="left:493px;top:1281px;width:2px;height:6px;background:#222;"></div>
<div class="t" style="left:472.59px;top:1263.00px;font-size:18px;line-height:18px;color:#444;letter-spacing:-0.300px;">1,169</div>
<div style="left:601px;top:1281px;width:2px;height:6px;background:#222;"></div>
<div class="t" style="left:580.65px;top:1263.00px;font-size:18px;line-height:18px;color:#444;letter-spacing:-0.300px;">1,419</div>
<div style="left:709px;top:1281px;width:2px;height:6px;background:#222;"></div>
<div class="t" style="left:688.71px;top:1263.00px;font-size:18px;line-height:18px;color:#444;letter-spacing:-0.300px;">1,669</div>
<div style="left:817px;top:1281px;width:2px;height:6px;background:#222;"></div>
<div class="t" style="left:796.77px;top:1263.00px;font-size:18px;line-height:18px;color:#444;letter-spacing:-0.300px;">1,919</div>
<div style="left:925px;top:1281px;width:2px;height:6px;background:#222;"></div>
<div class="t" style="left:904.83px;top:1263.00px;font-size:18px;line-height:18px;color:#444;letter-spacing:-0.300px;">2,169</div>
<div style="left:1033px;top:1281px;width:2px;height:6px;background:#222;"></div>
<div class="t" style="left:1012.89px;top:1263.00px;font-size:18px;line-height:18px;color:#444;letter-spacing:-0.300px;">2,419</div>
<div style="left:1141px;top:1281px;width:2px;height:6px;background:#222;"></div>
<div class="t" style="left:1120.95px;top:1263.00px;font-size:18px;line-height:18px;color:#444;letter-spacing:-0.300px;">2,668</div>
<div class="t" style="left:69.50px;top:717.50px;font-size:24px;line-height:24px;color:#222;letter-spacing:-0.268px;">1. MAPK10 vari...</div>
<div class="t" style="left:69.50px;top:931.50px;font-size:24px;line-height:24px;color:#222;letter-spacing:-0.268px;">2. MAPK10 vari...</div>
<div class="t" style="left:68.60px;top:1141.50px;font-size:24px;line-height:24px;color:#222;letter-spacing:-0.064px;">3. pUC19 extra...</div>
<div class="t" style="left:68.60px;top:1315.00px;font-size:24px;line-height:24px;color:#222;letter-spacing:-0.276px;">4. pUC19 (cut a...</div>
<svg style="left:0;top:0" width="1962" height="1378" viewBox="0 0 1962 1378"><defs>
<linearGradient id="gG" x1="0" y1="0" x2="0" y2="1"><stop offset="0" stop-color="#25d425"/><stop offset="0.35" stop-color="#10bb10"/><stop offset="1" stop-color="#008e00"/></linearGradient>
<linearGradient id="gK" x1="0" y1="0" x2="0" y2="1"><stop offset="0" stop-color="#8c8c8c"/><stop offset="0.5" stop-color="#5e5e5e"/><stop offset="1" stop-color="#3a3a3a"/></linearGradient>
<linearGradient id="gY" x1="0" y1="0" x2="0" y2="1"><stop offset="0" stop-color="#ffff70"/><stop offset="0.4" stop-color="#ffff00"/><stop offset="1" stop-color="#d0d000"/></linearGradient>
<linearGradient id="gL" x1="0" y1="0" x2="0" y2="1"><stop offset="0" stop-color="#ffffe0"/><stop offset="0.5" stop-color="#f4f4b8"/><stop offset="1" stop-color="#d4d490"/></linearGradient>
<linearGradient id="gP" x1="0" y1="0" x2="0" y2="1"><stop offset="0" stop-color="#ff5585"/><stop offset="0.4" stop-color="#f01e5c"/><stop offset="1" stop-color="#bf0a42"/></linearGradient>
<linearGradient id="gB" x1="0" y1="0" x2="0" y2="1"><stop offset="0" stop-color="#80dcff"/><stop offset="0.45" stop-color="#48a8f0"/><stop offset="1" stop-color="#2478c8"/></linearGradient>
<linearGradient id="gM" x1="0" y1="0" x2="0" y2="1"><stop offset="0" stop-color="#ff90ff"/><stop offset="0.5" stop-color="#f050f0"/><stop offset="1" stop-color="#c828c8"/></linearGradient>
<filter id="sh" x="-5%" y="-20%" width="110%" height="160%"><feDropShadow dx="2.5" dy="3.5" stdDeviation="0.6" flood-color="#000" flood-opacity="0.25"/></filter>
</defs>
<path d="M282.0 713.5 L1395.5 713.5 Q1400.0 713.5 1400.0 718.0 L1400.0 739.0 Q1400.0 743.5 1395.5 743.5 L282.0 743.5 Q277.5 743.5 277.5 739.0 L277.5 718.0 Q277.5 713.5 282.0 713.5 Z" fill="url(#gG)" stroke="#0a9a0a" stroke-width="1.2" filter="url(#sh)"/>
<path d="M282.0 749.5 L289.0 749.5 L303.5 764.5 L289.0 779.5 L282.0 779.5 Q277.5 779.5 277.5 775.0 L277.5 754.0 Q277.5 749.5 282.0 749.5 Z" fill="url(#gK)" stroke="#3a3a3a" stroke-width="1.2" filter="url(#sh)"/>
<path d="M308.5 749.5 L321.2 749.5 L335.7 764.5 L321.2 779.5 L308.5 779.5 Q304.0 779.5 304.0 775.0 L304.0 754.0 Q304.0 749.5 308.5 749.5 Z" fill="url(#gK)" stroke="#3a3a3a" stroke-width="1.2" filter="url(#sh)"/>
<path d="M340.2 749.5 L394.8 749.5 L409.3 764.5 L394.8 779.5 L340.2 779.5 Q335.7 779.5 335.7 775.0 L335.7 754.0 Q335.7 749.5 340.2 749.5 Z" fill="url(#gK)" stroke="#3a3a3a" stroke-width="1.2" filter="url(#sh)"/>
<path d="M413.8 749.5 L450.5 749.5 L465.0 764.5 L450.5 779.5 L413.8 779.5 Q409.3 779.5 409.3 775.0 L409.3 754.0 Q409.3 749.5 413.8 749.5 Z" fill="url(#gK)" stroke="#3a3a3a" stroke-width="1.2" filter="url(#sh)"/>
<path d="M469.5 749.5 L476.9 749.5 L491.4 764.5 L476.9 779.5 L469.5 779.5 Q465.0 779.5 465.0 775.0 L465.0 754.0 Q465.0 749.5 469.5 749.5 Z" fill="url(#gK)" stroke="#3a3a3a" stroke-width="1.2" filter="url(#sh)"/>
<path d="M495.9 749.5 L536.9 749.5 L551.4 764.5 L536.9 779.5 L495.9 779.5 Q491.4 779.5 491.4 775.0 L491.4 754.0 Q491.4 749.5 495.9 749.5 Z" fill="url(#gK)" stroke="#3a3a3a" stroke-width="1.2" filter="url(#sh)"/>
<path d="M555.9 749.5 L585.5 749.5 L600.0 764.5 L585.5 779.5 L555.9 779.5 Q551.4 779.5 551.4 775.0 L551.4 754.0 Q551.4 749.5 555.9 749.5 Z" fill="url(#gK)" stroke="#3a3a3a" stroke-width="1.2" filter="url(#sh)"/>
<path d="M312.2 785.5 L1183.5 785.5 L1200.0 800.5 L1183.5 815.5 L312.2 815.5 Q307.7 815.5 307.7 811.0 L307.7 790.0 Q307.7 785.5 312.2 785.5 Z" fill="url(#gY)" stroke="#c4c400" stroke-width="1.2" filter="url(#sh)"/>
<path d="M874.2 858 L1004.5 858 L1021.0 873.0 L1004.5 888 L874.2 888 Q869.7 888 869.7 883.5 L869.7 862.5 Q869.7 858 874.2 858 Z" fill="url(#gL)" stroke="#c4c488" stroke-width="1.2" filter="url(#sh)"/>
<path d="M1104.2 858 L1138.0 858 L1154.5 873.0 L1138.0 888 L1104.2 888 Q1099.7 888 1099.7 883.5 L1099.7 862.5 Q1099.7 858 1104.2 858 Z" fill="url(#gL)" stroke="#c4c488" stroke-width="1.2" filter="url(#sh)"/>
<path d="M282.0 927.5 L1944.5 927.5 Q1949.0 927.5 1949.0 932.0 L1949.0 953.0 Q1949.0 957.5 1944.5 957.5 L282.0 957.5 Q277.5 957.5 277.5 953.0 L277.5 932.0 Q277.5 927.5 282.0 927.5 Z" fill="url(#gG)" stroke="#0a9a0a" stroke-width="1.2" filter="url(#sh)"/>
<path d="M920.5 964 L1485.5 964 L1500.0 979.0 L1485.5 994 L920.5 994 Q916.0 994 916.0 989.5 L916.0 968.5 Q916.0 964 920.5 964 Z" fill="url(#gK)" stroke="#3a3a3a" stroke-width="1.2" filter="url(#sh)"/>
<path d="M282.0 964 L306.7 964 L321.2 979.0 L306.7 994 L282.0 994 Q277.5 994 277.5 989.5 L277.5 968.5 Q277.5 964 282.0 964 Z" fill="url(#gK)" stroke="#3a3a3a" stroke-width="1.2" filter="url(#sh)"/>
<path d="M325.7 964 L356.7 964 L371.2 979.0 L356.7 994 L325.7 994 Q321.2 994 321.2 989.5 L321.2 968.5 Q321.2 964 325.7 964 Z" fill="url(#gK)" stroke="#3a3a3a" stroke-width="1.2" filter="url(#sh)"/>
<path d="M375.7 964 L389.4 964 L403.9 979.0 L389.4 994 L375.7 994 Q371.2 994 371.2 989.5 L371.2 968.5 Q371.2 964 375.7 964 Z" fill="url(#gK)" stroke="#3a3a3a" stroke-width="1.2" filter="url(#sh)"/>
<path d="M408.4 964 L460.9 964 L475.4 979.0 L460.9 994 L408.4 994 Q403.9 994 403.9 989.5 L403.9 968.5 Q403.9 964 408.4 964 Z" fill="url(#gK)" stroke="#3a3a3a" stroke-width="1.2" filter="url(#sh)"/>
<path d="M479.9 964 L516.7 964 L531.2 979.0 L516.7 994 L479.9 994 Q475.4 994 475.4 989.5 L475.4 968.5 Q475.4 964 479.9 964 Z" fill="url(#gK)" stroke="#3a3a3a" stroke-width="1.2" filter="url(#sh)"/>
<path d="M535.7 964 L542.9 964 L557.4 979.0 L542.9 994 L535.7 994 Q531.2 994 531.2 989.5 L531.2 968.5 Q531.2 964 535.7 964 Z" fill="url(#gK)" stroke="#3a3a3a" stroke-width="1.2" filter="url(#sh)"/>
<path d="M561.9 964 L602.8 964 L617.3 979.0 L602.8 994 L561.9 994 Q557.4 994 557.4 989.5 L557.4 968.5 Q557.4 964 561.9 964 Z" fill="url(#gK)" stroke="#3a3a3a" stroke-width="1.2" filter="url(#sh)"/>
<path d="M621.8 964 L675.1 964 L689.6 979.0 L675.1 994 L621.8 994 Q617.3 994 617.3 989.5 L617.3 968.5 Q617.3 964 621.8 964 Z" fill="url(#gK)" stroke="#3a3a3a" stroke-width="1.2" filter="url(#sh)"/>
<path d="M694.1 964 L707.2 964 L721.7 979.0 L707.2 994 L694.1 994 Q689.6 994 689.6 989.5 L689.6 968.5 Q689.6 964 694.1 964 Z" fill="url(#gK)" stroke="#3a3a3a" stroke-width="1.2" filter="url(#sh)"/>
<path d="M726.2 964 L784.7 964 L799.2 979.0 L784.7 994 L726.2 994 Q721.7 994 721.7 989.5 L721.7 968.5 Q721.7 964 726.2 964 Z" fill="url(#gK)" stroke="#3a3a3a" stroke-width="1.2" filter="url(#sh)"/>
<path d="M803.7 964 L840.5 964 L855.0 979.0 L840.5 994 L803.7 994 Q799.2 994 799.2 989.5 L799.2 968.5 Q799.2 964 803.7 964 Z" fill="url(#gK)" stroke="#3a3a3a" stroke-width="1.2" filter="url(#sh)"/>
<path d="M859.5 964 L866.9 964 L881.4 979.0 L866.9 994 L859.5 994 Q855.0 994 855.0 989.5 L855.0 968.5 Q855.0 964 859.5 964 Z" fill="url(#gK)" stroke="#3a3a3a" stroke-width="1.2" filter="url(#sh)"/>
<path d="M885.9 964 L901.5 964 L916.0 979.0 L901.5 994 L885.9 994 Q881.4 994 881.4 989.5 L881.4 968.5 Q881.4 964 885.9 964 Z" fill="url(#gK)" stroke="#3a3a3a" stroke-width="1.2" filter="url(#sh)"/>
<path d="M378.2 1000 L909.0 1000 L925.5 1015.0 L909.0 1030 L378.2 1030 Q373.7 1030 373.7 1025.5 L373.7 1004.5 Q373.7 1000 378.2 1000 Z" fill="url(#gY)" stroke="#c4c400" stroke-width="1.2" filter="url(#sh)"/>
<path d="M958.5 1000 L1046.5 1000 L1063.0 1015.0 L1046.5 1030 L958.5 1030 Q954.0 1030 954.0 1025.5 L954.0 1004.5 Q954.0 1000 958.5 1000 Z" fill="url(#gL)" stroke="#c4c488" stroke-width="1.2" filter="url(#sh)"/>
<path d="M944.5 1036 L1074.5 1036 L1091.0 1051.0 L1074.5 1066 L944.5 1066 Q940.0 1066 940.0 1061.5 L940.0 1040.5 Q940.0 1036 944.5 1036 Z" fill="url(#gL)" stroke="#c4c488" stroke-width="1.2" filter="url(#sh)"/>
<rect x="278" y="1150" width="900" height="6" fill="#000"/>
<path d="M569.1 1137.5 L347.9 1137.5 L331.4 1152.5 L347.9 1167.5 L569.1 1167.5 Q573.6 1167.5 573.6 1163.0 L573.6 1142.0 Q573.6 1137.5 569.1 1137.5 Z" fill="url(#gP)" stroke="#c01048" stroke-width="1.2" filter="url(#sh)"/>
<path d="M1031.0 1137.5 L676.5 1137.5 L660.0 1152.5 L676.5 1167.5 L1031.0 1167.5 Q1035.5 1167.5 1035.5 1163.0 L1035.5 1142.0 Q1035.5 1137.5 1031.0 1137.5 Z" fill="url(#gG)" stroke="#0a9a0a" stroke-width="1.2" filter="url(#sh)"/>
<path d="M507.6 1173.5 L513.2 1188.5 L507.6 1203.5 Z" fill="#0a14d8"/>
<path d="M515.2 1173.5 L521 1188.5 L515.2 1203.5 Z" fill="#d6a010"/>
<path d="M527.9 1173.5 L554.9 1173.5 L571.4 1188.5 L554.9 1203.5 L527.9 1203.5 Q523.4 1203.5 523.4 1199.0 L523.4 1178.0 Q523.4 1173.5 527.9 1173.5 Z" fill="url(#gP)" stroke="#c01048" stroke-width="1.2" filter="url(#sh)"/>
<path d="M579.6 1173.5 L573.6 1188.5 L579.6 1203.5 Z" fill="#d6a010"/>
<path d="M587.6 1173.5 L581.8 1188.5 L587.6 1203.5 Z" fill="#0a14d8"/>
<path d="M1031.0 1173.5 L676.5 1173.5 L660.0 1188.5 L676.5 1203.5 L1031.0 1203.5 Q1035.5 1203.5 1035.5 1199.0 L1035.5 1178.0 Q1035.5 1173.5 1031.0 1173.5 Z" fill="url(#gY)" stroke="#c4c400" stroke-width="1.2" filter="url(#sh)"/>
<path d="M1055 1173.5 L1049 1188.5 L1055 1203.5 Z" fill="#d6a010"/>
<path d="M1066 1173.5 L1059 1188.5 L1066 1203.5 Z" fill="#0a14d8"/>
<path d="M583.1 1210 L347.9 1210 L331.4 1225.0 L347.9 1240 L583.1 1240 Q587.6 1240 587.6 1235.5 L587.6 1214.5 Q587.6 1210 583.1 1210 Z" fill="url(#gB)" stroke="#2a7cc4" stroke-width="1.2" filter="url(#sh)"/>
<path d="M1031.5 1210 L1020.0 1210 L1003.5 1225.0 L1020.0 1240 L1031.5 1240 Q1036.0 1240 1036.0 1235.5 L1036.0 1214.5 Q1036.0 1210 1031.5 1210 Z" fill="url(#gM)" stroke="#c030c0" stroke-width="1.2" filter="url(#sh)"/>
<path d="M890 1129.5 L910.7 1129.5 L900.35 1139 Z" fill="#101078"/>
<path d="M1082.3 1129.5 L1103 1129.5 L1092.65 1139 Z" fill="#101078"/>
<rect x="278" y="1324" width="900" height="6" fill="#000"/>
<path d="M599.4 1311.5 L380.3 1311.5 L363.8 1326.5 L380.3 1341.5 L599.4 1341.5 Q603.9 1341.5 603.9 1337.0 L603.9 1316.0 Q603.9 1311.5 599.4 1311.5 Z" fill="url(#gP)" stroke="#c01048" stroke-width="1.2" filter="url(#sh)"/>
<path d="M1061.5 1311.5 L707.9 1311.5 L691.4 1326.5 L707.9 1341.5 L1061.5 1341.5 Q1066.0 1341.5 1066.0 1337.0 L1066.0 1316.0 Q1066.0 1311.5 1061.5 1311.5 Z" fill="url(#gG)" stroke="#0a9a0a" stroke-width="1.2" filter="url(#sh)"/>
<path d="M539.4 1347.7 L545 1362.7 L539.4 1377.7 Z" fill="#0a14d8"/>
<path d="M547.2 1347.7 L553 1362.7 L547.2 1377.7 Z" fill="#d6a010"/>
<path d="M558.2 1347.7 L586.9 1347.7 L603.4 1362.7 L586.9 1377.7 L558.2 1377.7 Q553.7 1377.7 553.7 1373.2 L553.7 1352.2 Q553.7 1347.7 558.2 1347.7 Z" fill="url(#gP)" stroke="#c01048" stroke-width="1.2" filter="url(#sh)"/>
<path d="M612 1347.7 L606 1362.7 L612 1377.7 Z" fill="#d6a010"/>
<path d="M619.6 1347.7 L613.6 1362.7 L619.6 1377.7 Z" fill="#0a14d8"/>
<path d="M1061.5 1347.7 L707.9 1347.7 L691.4 1362.7 L707.9 1377.7 L1061.5 1377.7 Q1066.0 1377.7 1066.0 1373.2 L1066.0 1352.2 Q1066.0 1347.7 1061.5 1347.7 Z" fill="url(#gY)" stroke="#c4c400" stroke-width="1.2" filter="url(#sh)"/>
<path d="M1088 1347.7 L1082.5 1362.7 L1088 1377.7 Z" fill="#d6a010"/>
<path d="M1096 1347.7 L1089.5 1362.7 L1096 1377.7 Z" fill="#0a14d8"/>
<path d="M1352.0 1347.7 L1230.5 1347.7 L1214.0 1362.7 L1230.5 1377.7 L1352.0 1377.7 Q1356.5 1377.7 1356.5 1373.2 L1356.5 1352.2 Q1356.5 1347.7 1352.0 1347.7 Z" fill="url(#gY)" stroke="#c4c400" stroke-width="1.2" filter="url(#sh)"/>
<path d="M1378 1347.7 L1372 1362.7 L1378 1377.7 Z" fill="#d6a010"/>
<path d="M1388 1347.7 L1381 1362.7 L1388 1377.7 Z" fill="#0a14d8"/>
<path d="M922.5 1304 L942.5 1304 L932.5 1313.5 Z" fill="#101078"/>
<path d="M1115 1304 L1134 1304 L1124.5 1313.5 Z" fill="#101078"/></svg>
<div class="t" style="left:347.20px;top:754.50px;font-size:24px;line-height:24px;color:#fff;letter-spacing:-0.739px;">M...</div>
<div class="t" style="left:421.30px;top:754.50px;font-size:24px;line-height:24px;color:#fff;letter-spacing:0.540px;">M</div>
<div class="t" style="left:503.00px;top:754.50px;font-size:24px;line-height:24px;color:#fff;letter-spacing:-0.372px;">M.</div>
<div class="t" style="left:527.00px;top:789.50px;font-size:24px;line-height:24px;color:#000;letter-spacing:-0.898px;">MAPK10 CDS</div>
<div class="t" style="left:881.00px;top:861.00px;font-size:24px;line-height:24px;color:#000;letter-spacing:-0.714px;">MAPK10 ...</div>
<div class="t" style="left:1111.00px;top:861.00px;font-size:24px;line-height:24px;color:#000;letter-spacing:0.540px;">M</div>
<div class="t" style="left:705.00px;top:931.20px;font-size:24px;line-height:24px;color:#fff;letter-spacing:-0.228px;">MAPK10 gene</div>
<div class="t" style="left:332.90px;top:967.30px;font-size:24px;line-height:24px;color:#fff;letter-spacing:0.540px;">M</div>
<div class="t" style="left:415.00px;top:967.30px;font-size:24px;line-height:24px;color:#fff;letter-spacing:-0.739px;">M...</div>
<div class="t" style="left:487.00px;top:967.30px;font-size:24px;line-height:24px;color:#fff;letter-spacing:0.540px;">M</div>
<div class="t" style="left:569.00px;top:967.30px;font-size:24px;line-height:24px;color:#fff;letter-spacing:-0.872px;">M.</div>
<div class="t" style="left:629.00px;top:967.30px;font-size:24px;line-height:24px;color:#fff;letter-spacing:-0.772px;">M...</div>
<div class="t" style="left:733.40px;top:967.30px;font-size:24px;line-height:24px;color:#fff;letter-spacing:-0.805px;">M...</div>
<div class="t" style="left:811.00px;top:967.30px;font-size:24px;line-height:24px;color:#fff;letter-spacing:0.540px;">M</div>
<div class="t" style="left:999.50px;top:967.30px;font-size:24px;line-height:24px;color:#fff;letter-spacing:-0.044px;">MAPK10 exon</div>
<div class="t" style="left:567.00px;top:1003.20px;font-size:24px;line-height:24px;color:#000;letter-spacing:-0.898px;">MAPK10 CDS</div>
<div class="t" style="left:965.60px;top:1003.20px;font-size:24px;line-height:24px;color:#000;letter-spacing:-0.711px;">MAP...</div>
<div class="t" style="left:951.00px;top:1039.00px;font-size:24px;line-height:24px;color:#000;letter-spacing:-0.647px;">MAPK10 ...</div>
<div class="t" style="left:443.40px;top:1141.70px;font-size:24px;line-height:24px;color:#fff;letter-spacing:-2.186px;">RNA</div>
<div class="t" style="left:815.00px;top:1142.00px;font-size:24px;line-height:24px;color:#fff;letter-spacing:0.062px;">bla gene</div>
<div class="t" style="left:535.00px;top:1177.50px;font-size:24px;line-height:24px;color:#fff;letter-spacing:0.540px;">R</div>
<div class="t" style="left:818.50px;top:1177.50px;font-size:24px;line-height:24px;color:#000;letter-spacing:-0.643px;">bla CDS</div>
<div class="t" style="left:419.00px;top:1213.50px;font-size:24px;line-height:24px;color:#000;letter-spacing:0.728px;">rep origin</div>
<div class="t" style="left:473.00px;top:1315.60px;font-size:24px;line-height:24px;color:#fff;letter-spacing:-2.086px;">RNA</div>
<div class="t" style="left:845.00px;top:1315.60px;font-size:24px;line-height:24px;color:#fff;letter-spacing:0.062px;">bla gene</div>
<div class="t" style="left:565.50px;top:1351.50px;font-size:24px;line-height:24px;color:#fff;letter-spacing:0.540px;">R</div>
<div class="t" style="left:849.00px;top:1351.50px;font-size:24px;line-height:24px;color:#000;letter-spacing:-0.727px;">bla CDS</div>
<div class="t" style="left:1236.00px;top:1351.50px;font-size:24px;line-height:24px;color:#000;letter-spacing:0.130px;">lacZalph...</div>
<div style="left:1987px;top:660px;width:516px;height:718px;background:#fafafa;"></div>
<div style="left:1986px;top:660px;width:2px;height:718px;background:#dcdcdc;"></div>
<div style="left:2503px;top:660px;width:69px;height:718px;background:#ececec;"></div>
<div style="left:2502px;top:660px;width:2px;height:550px;background:#d6d6d6;"></div>
<div style="left:2502px;top:1210px;width:2px;height:168px;background:#e0e0e0;"></div>
<div style="left:1996px;top:673px;width:51px;height:43px;background:#fff;border:2px solid #c6c6c6;border-radius:6px;"></div>
<div style="left:2052px;top:673px;width:51px;height:43px;background:#fafafa;border:2px solid #dcdcdc;border-radius:6px;"></div>
<div style="left:2142px;top:673px;width:127px;height:45px;background:#fff;border:2px solid #c6c6c6;border-radius:6px;"></div>
<div style="left:2226px;top:675px;width:2px;height:41px;background:#c6c6c6;"></div>
<div style="left:2328px;top:673px;width:51px;height:43px;background:#fff;border:2px solid #c6c6c6;border-radius:6px;"></div>
<div style="left:2384px;top:673px;width:51px;height:43px;background:#fff;border:2px solid #c6c6c6;border-radius:6px;"></div>
<div style="left:2440px;top:673px;width:51px;height:43px;background:#fafafa;border:2px solid #dadada;border-radius:6px;"></div>
<div class="t" style="left:2202.00px;top:685.00px;font-size:24px;line-height:24px;color:#222;letter-spacing:0.000px;">2</div>
<div class="t b" style="left:2273.50px;top:688.00px;font-size:20px;line-height:20px;color:#222;letter-spacing:0.000px;font-weight:bold;">%</div>
<svg style="left:1996px;top:673px" width="110" height="43" viewBox="0 0 110 43"><g fill="none" stroke-width="1.9" stroke-linecap="round"><g stroke="#666"><circle cx="23.500" cy="19.800" r="9.900"/><path d="M30.700 27 L38.800 34.200 M23.500 14.800 V24.800 M18.500 19.800 H28.500"/></g><g stroke="#bcbcbc"><circle cx="79.500" cy="19.800" r="9.900"/><path d="M86.700 27 L94.800 34.200 M74.500 19.800 H84.500"/></g></g></svg>
<svg style="left:2226px;top:673px" width="44" height="45" viewBox="0 0 44 45"><path d="M12.500 18.500 L20.500 10.500 L28.500 18.500 M12.500 26.500 L20.500 34.500 L28.500 26.500" fill="none" stroke="#666" stroke-width="1.9"/></svg>
<svg style="left:2328px;top:673px" width="165" height="43" viewBox="0 0 165 43"><g fill="none" stroke-width="1.9" stroke-linecap="butt"><g stroke="#666"><path d="M12 21 H24 M19 15.500 L24.500 21 L19 26.500 M40 21 H28 M33 15.500 L27.500 21 L33 26.500"/><circle cx="80.300" cy="19.600" r="10.300"/><path d="M87.800 27 L94.800 33.500"/><path d="M76.200 24.200 L80.300 13.800 L84.400 24.200 M77.400 21 H83.200" stroke-width="1.7"/></g><g stroke="#bcbcbc"><path d="M134.700 18.700 L125.800 9.200 M125.800 16 V9 H132.800 M140.700 18.700 L150.500 9.200 M143.500 9 H150.500 V16 M134.700 24.700 L125.800 33.500 M125.800 26.500 V33.500 H132.800 M140.700 24.700 L150.500 33.500 M143.500 33.500 H150.500 V26.500"/></g></g></svg>
<div style="left:1988px;top:731px;width:515px;height:2px;background:#dcdcdc;"></div>
<div style="left:1988px;top:788px;width:515px;height:2px;background:#dcdcdc;"></div>
<div style="left:1988px;top:731px;width:574px;height:59px;background:#fafafa;border:2px solid #dcdcdc;border-left:none;border-radius:0 10px 10px 0;"></div>
<div class="t b" style="left:1999.00px;top:748.00px;font-size:26px;line-height:26px;color:#222;letter-spacing:0.867px;font-weight:bold;">General</div>
<svg style="left:2516px;top:744px" width="36" height="34" viewBox="0 0 36 34"><path d="M5 13.500 L17 4.500 L29 13.500 V26.500 Q29 28.500 27 28.500 H7 Q5 28.500 5 26.500 Z M13.500 28.500 V18.500 H20.500 V28.500" fill="none" stroke="#6a6a6a" stroke-width="2" stroke-linejoin="round"/></svg>
<div class="t" style="left:2004.70px;top:811.50px;font-size:24px;line-height:24px;color:#222;letter-spacing:0.181px;">Colors:</div>
<div style="left:2094px;top:803px;width:336px;height:41px;background:#fff;border:2px solid #c2c2c2;border-radius:5px;"></div>
<div class="t" style="left:2104.00px;top:811.50px;font-size:24px;line-height:24px;color:#c00000;letter-spacing:0.000px;">A</div>
<div class="t" style="left:2125.00px;top:811.50px;font-size:24px;line-height:24px;color:#0000c0;letter-spacing:0.000px;">C</div>
<div class="t" style="left:2145.00px;top:811.50px;font-size:24px;line-height:24px;color:#a0a000;letter-spacing:0.000px;">G</div>
<div class="t" style="left:2165.00px;top:811.50px;font-size:24px;line-height:24px;color:#00a000;letter-spacing:0.000px;">T</div>
<div class="t" style="left:2184.00px;top:811.50px;font-size:24px;line-height:24px;color:#000;letter-spacing:0.000px;">-</div>
<svg style="left:2394px;top:810px" width="30" height="26" viewBox="0 0 30 26"><path d="M5.500 8 L14.500 17 L23.500 8" fill="none" stroke="#555" stroke-width="2"/></svg>
<div class="t" style="left:2439.00px;top:811.50px;font-size:24px;line-height:24px;color:#1670d8;letter-spacing:0.047px;">Edit</div>
<div style="left:1988px;top:856px;width:515px;height:2px;background:#e4e4e4;"></div>
<div style="left:1988px;top:920px;width:515px;height:2px;background:#e4e4e4;"></div>
<div style="left:1988px;top:984px;width:515px;height:2px;background:#e4e4e4;"></div>
<div style="left:1988px;top:1082px;width:515px;height:2px;background:#e4e4e4;"></div>
<div style="left:1988px;top:1146px;width:515px;height:2px;background:#e4e4e4;"></div>
<div class="t" style="left:2395.00px;top:878.00px;font-size:24px;line-height:24px;color:#1670d8;letter-spacing:0.133px;">Options</div>
<div class="t" style="left:2395.00px;top:941.50px;font-size:24px;line-height:24px;color:#1670d8;letter-spacing:0.133px;">Options</div>
<div class="t" style="left:2395.00px;top:1024.00px;font-size:24px;line-height:24px;color:#1670d8;letter-spacing:0.133px;">Options</div>
<div class="t" style="left:2395.00px;top:1104.00px;font-size:24px;line-height:24px;color:#1670d8;letter-spacing:0.133px;">Options</div>
<div class="t" style="left:2045.00px;top:941.50px;font-size:24px;line-height:24px;color:#222;letter-spacing:-0.705px;">Annotations</div>
<div class="t" style="left:2038.00px;top:1005.50px;font-size:24px;line-height:24px;color:#222;letter-spacing:0.173px;">Complement</div>
<div class="t" style="left:2040.00px;top:1039.00px;font-size:24px;line-height:24px;color:#222;letter-spacing:-0.001px;">Translation</div>
<div class="t" style="left:2032.00px;top:1104.00px;font-size:24px;line-height:24px;color:#222;letter-spacing:0.213px;">Restriction Sites</div>
<div class="t" style="left:2063.00px;top:1167.50px;font-size:24px;line-height:24px;color:#8a8a8a;letter-spacing:0.501px;">Show overview</div>
<div class="t" style="left:2099.00px;top:1247.00px;font-size:24px;line-height:24px;color:#222;letter-spacing:0.446px;">Names</div>
<div style="left:2004px;top:1278px;width:446px;height:46px;background:#f2f2f2;border:2px solid #d2d2d2;border-radius:5px;"></div>
<div class="t" style="left:2108.00px;top:1290.00px;font-size:24px;line-height:24px;color:#8c8c8c;letter-spacing:0.557px;">Description</div>
<svg style="left:2410px;top:1288px" width="90" height="28" viewBox="0 0 90 28"><g fill="none" stroke-width="2"><path d="M7.500 8 L16.500 17 L25.500 8" stroke="#aaa"/><path d="M64.500 3 V21 M58 15 L64.500 21.500 L71 15 M70 3.500 H82 M70 8.500 H82 M73 13.500 H82" stroke="#666" stroke-width="1.8"/></g></svg>
<div class="t" style="left:2092.00px;top:1329.50px;font-size:24px;line-height:24px;color:#222;letter-spacing:0.712px;">Sequence numbers</div>
<div style="left:2513px;top:849px;width:44px;height:2px;background:#d6d6d6;"></div>
<div style="left:2513px;top:909px;width:44px;height:2px;background:#d6d6d6;"></div>
<div style="left:2513px;top:969px;width:44px;height:2px;background:#d6d6d6;"></div>
<div style="left:2513px;top:1029px;width:44px;height:2px;background:#d6d6d6;"></div>
<div style="left:2513px;top:1089px;width:44px;height:2px;background:#d6d6d6;"></div>
<div style="left:2513px;top:1147px;width:44px;height:2px;background:#d6d6d6;"></div>
<div style="left:2513px;top:1209px;width:44px;height:2px;background:#d6d6d6;"></div>
<svg style="left:2503px;top:790px" width="69" height="430" viewBox="0 0 69 430"><g fill="none" stroke="#6a6a6a" stroke-width="1.9" stroke-linejoin="round">
<rect x="18" y="19" width="25" height="18" rx="2.500"/><path d="M24 43.500 H37 M27.500 37 V43.500 M33.500 37 V43.500"/>
<path d="M18 78 V102.800 H43.800 M22 102.800 V80.600 H26.300 V102.800 M30 102.800 V86.400 H34.300 V102.800 M38 102.800 V92.500 H42.300 V102.800" stroke-linejoin="miter"/>
<path d="M38 144.400 H17.700 V157 H38 M35.600 140.400 L44.400 150.900 L35.600 161.300" stroke-linejoin="miter"/>
<path d="M20.700 204.800 H17.700 V217.200 H38 M35.600 204.800 H38 M35.600 200.500 L44.400 211 L35.600 221.500" stroke-linejoin="miter"/>
<path d="M17.300 281.200 L33.600 264.300 M17.300 258.400 L26.500 266.900 M29 270 L34.500 274.300"/><circle cx="37.900" cy="263" r="4.100"/><circle cx="37.900" cy="277" r="4.100"/>
<circle cx="31" cy="329.900" r="4.300"/><path d="M31.00 316.50 L31.53 316.51 L32.05 316.54 L32.57 316.59 L32.95 317.58 L33.23 318.67 L33.43 319.76 L33.58 320.76 L33.94 320.86 L34.29 320.99 L34.64 321.12 L34.98 321.27 L35.31 321.44 L35.64 321.61 L36.45 321.01 L37.36 320.38 L38.33 319.81 L39.29 319.38 L39.70 319.71 L40.10 320.06 L40.48 320.42 L40.84 320.80 L41.19 321.20 L41.52 321.61 L41.09 322.57 L40.52 323.54 L39.89 324.45 L39.29 325.26 L39.46 325.59 L39.63 325.92 L39.78 326.26 L39.91 326.61 L40.04 326.96 L40.14 327.32 L41.14 327.47 L42.23 327.67 L43.32 327.95 L44.31 328.33 L44.36 328.85 L44.39 329.37 L44.40 329.90 L44.39 330.43 L44.36 330.95 L44.31 331.47 L43.32 331.85 L42.23 332.13 L41.14 332.33 L40.14 332.48 L40.04 332.84 L39.91 333.19 L39.78 333.54 L39.63 333.88 L39.46 334.21 L39.29 334.54 L39.89 335.35 L40.52 336.26 L41.09 337.23 L41.52 338.19 L41.19 338.60 L40.84 339.00 L40.48 339.38 L40.10 339.74 L39.70 340.09 L39.29 340.42 L38.33 339.99 L37.36 339.42 L36.45 338.79 L35.64 338.19 L35.31 338.36 L34.98 338.53 L34.64 338.68 L34.29 338.81 L33.94 338.94 L33.58 339.04 L33.43 340.04 L33.23 341.13 L32.95 342.22 L32.57 343.21 L32.05 343.26 L31.53 343.29 L31.00 343.30 L30.47 343.29 L29.95 343.26 L29.43 343.21 L29.05 342.22 L28.77 341.13 L28.57 340.04 L28.42 339.04 L28.06 338.94 L27.71 338.81 L27.36 338.68 L27.02 338.53 L26.69 338.36 L26.36 338.19 L25.55 338.79 L24.64 339.42 L23.67 339.99 L22.71 340.42 L22.30 340.09 L21.90 339.74 L21.52 339.38 L21.16 339.00 L20.81 338.60 L20.48 338.19 L20.91 337.23 L21.48 336.26 L22.11 335.35 L22.71 334.54 L22.54 334.21 L22.37 333.88 L22.22 333.54 L22.09 333.19 L21.96 332.84 L21.86 332.48 L20.86 332.33 L19.77 332.13 L18.68 331.85 L17.69 331.47 L17.64 330.95 L17.61 330.43 L17.60 329.90 L17.61 329.37 L17.64 328.85 L17.69 328.33 L18.68 327.95 L19.77 327.67 L20.86 327.47 L21.86 327.32 L21.96 326.96 L22.09 326.61 L22.22 326.26 L22.37 325.92 L22.54 325.59 L22.71 325.26 L22.11 324.45 L21.48 323.54 L20.91 322.57 L20.48 321.61 L20.81 321.20 L21.16 320.80 L21.52 320.42 L21.90 320.06 L22.30 319.71 L22.71 319.38 L23.67 319.81 L24.64 320.38 L25.55 321.01 L26.36 321.61 L26.69 321.44 L27.02 321.27 L27.36 321.12 L27.71 320.99 L28.06 320.86 L28.42 320.76 L28.57 319.76 L28.77 318.67 L29.05 317.58 L29.43 316.59 L29.95 316.54 L30.47 316.51 Z"/>
<path d="M20.300 400 L39.800 381.500"/><circle cx="24.200" cy="384.700" r="4.100"/><circle cx="36" cy="397.100" r="4.100"/>
</g><text x="23.600" y="212" font-size="17" font-family="Liberation Sans" fill="#6a6a6a">?</text></svg>
<div style="left:560px;top:574px;width:1000px;height:300px;background:#fafafa;border-radius:20px;box-shadow:0 0 0 1px rgba(0,0,0,0.22),0 16px 32px 1px rgba(0,0,0,0.29),0 2px 6px rgba(0,0,0,0.10);"></div>
<div style="left:561px;top:628px;width:998px;height:1.5px;background:#d2d2d2;"></div>
<div style="left:576px;top:590px;width:24px;height:24px;background:#e1e1e1;border-radius:12px;border:1.5px solid #cacaca;"></div>
<div style="left:616px;top:590px;width:24px;height:24px;background:#e1e1e1;border-radius:12px;border:1.5px solid #cacaca;"></div>
<div style="left:656px;top:590px;width:24px;height:24px;background:#e1e1e1;border-radius:12px;border:1.5px solid #cacaca;"></div>
<div class="t b" style="left:941.50px;top:588.00px;font-size:26px;line-height:26px;color:#262626;letter-spacing:0.420px;font-weight:bold;">Registration result</div>
<div class="t" style="left:629.70px;top:696.00px;font-size:27px;line-height:27px;color:#1e1e1e;letter-spacing:0.666px;">8 out of 8 entities have been successfully registered.</div>
<div class="t" style="left:1342.00px;top:696.00px;font-size:27px;line-height:27px;color:#0000ee;letter-spacing:0.446px;">Show details</div>
<div style="left:1342px;top:720px;width:158px;height:2px;background:#0000ee;"></div>
<div style="left:616px;top:765px;width:252px;height:45px;background:#ffffff;border:2px solid #b8b8b8;border-radius:6px;"></div>
<div class="t" style="left:647.00px;top:775.50px;font-size:24px;line-height:24px;color:#222;letter-spacing:0.503px;">More Options</div>
<svg style="left:806px;top:772px" width="32" height="26" viewBox="0 0 32 26"><path d="M7.500 9.500 L16 18 L24.500 9.500" fill="none" stroke="#6a6a6a" stroke-width="3"/></svg>
<div style="left:1356px;top:772px;width:144px;height:46px;background:#ffffff;border:2px solid #b8b8b8;border-radius:6px;"></div>
<div class="t" style="left:1398.60px;top:784.00px;font-size:24px;line-height:24px;color:#222;letter-spacing:-0.236px;">Close</div>
<div style="left:1152px;top:856px;width:1000px;height:500px;background:#fafafa;border-radius:20px;overflow:hidden;box-shadow:0 0 0 1px rgba(0,0,0,0.28),0 26px 62px 5px rgba(0,0,0,0.43),0 3px 10px rgba(0,0,0,0.10);"><div style="left:0;top:0;width:1000px;height:55px;background:linear-gradient(#ededed,#d5d5d5);"></div><div style="left:0;top:54px;width:1000px;height:2px;background:#b6b6b6;"></div></div>
<div style="left:1168px;top:872px;width:24px;height:24px;background:#ee6a5e;border-radius:12px;border:1px solid #d8584c;"></div>
<div style="left:1208px;top:872px;width:24px;height:24px;background:#d6d6d6;border-radius:12px;border:1.5px solid #bdbdbd;"></div>
<div style="left:1248px;top:872px;width:24px;height:24px;background:#d6d6d6;border-radius:12px;border:1.5px solid #bdbdbd;"></div>
<div class="t b" style="left:1527.30px;top:870.30px;font-size:26px;line-height:26px;color:#262626;letter-spacing:0.427px;font-weight:bold;">Registration details</div>
<div style="left:1192px;top:956px;width:920px;height:284px;background:#ffffff;border:2px solid #7ba8dd;"></div>
<div style="left:2086px;top:958px;width:24px;height:280px;background:#f2f2f2;"></div>
<div style="left:2090px;top:963px;width:16px;height:239px;background:#dcdcdc;border-radius:8px;"></div>
<div class="t" style="left:1201.00px;top:968.00px;font-size:24px;line-height:24px;color:#222;letter-spacing:0.464px;">MAPK10 variant 2: registered (Bioregister Id = ABC-000077)</div>
<div class="t" style="left:1201.00px;top:1002.00px;font-size:24px;line-height:24px;color:#222;letter-spacing:0.455px;">MAPK10 variant 1: registered (Bioregister Id = ABC-000078)</div>
<div class="t" style="left:1201.00px;top:1036.00px;font-size:24px;line-height:24px;color:#222;letter-spacing:0.535px;">pUC19 extraction: registered (Bioregister Id = ABC-000079)</div>
<div class="t" style="left:1201.00px;top:1070.00px;font-size:24px;line-height:24px;color:#222;letter-spacing:0.460px;">pUC19 (cut at position 669): registered (Bioregister Id = ABC-000080)</div>
<div class="t" style="left:1201.00px;top:1104.00px;font-size:24px;line-height:24px;color:#222;letter-spacing:0.460px;">pUC19 (cut at position 669): registered (Bioregister Id = ABC-000080)</div>
<div class="t" style="left:1201.00px;top:1138.00px;font-size:24px;line-height:24px;color:#222;letter-spacing:0.464px;">MAPK10 variant 3: registered (Bioregister Id = ABC-000081)</div>
<div class="t" style="left:1201.00px;top:1172.00px;font-size:24px;line-height:24px;color:#222;letter-spacing:0.493px;">X15635: registered (Bioregister Id = ABC-000082)</div>
<div class="t" style="left:1201.00px;top:1206.00px;font-size:24px;line-height:24px;color:#222;letter-spacing:0.493px;">X15635: registered (Bioregister Id = ABC-000082)</div>
<div style="left:1948px;top:1260px;width:144px;height:46px;background:#ffffff;border:2px solid #b8b8b8;border-radius:6px;"></div>
<div class="t" style="left:1991.00px;top:1271.50px;font-size:24px;line-height:24px;color:#222;letter-spacing:-0.336px;">Close</div>
</body></html>
